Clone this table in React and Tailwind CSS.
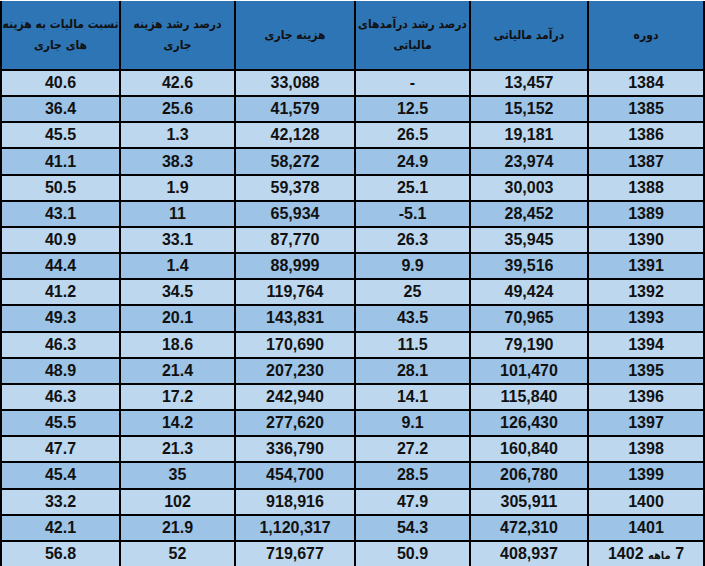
import React from 'react';

const headers = [
  ['دوره'],
  ['درآمد مالیاتی'],
  ['درصد رشد درآمدهای', 'مالیاتی'],
  ['هزینه جاری'],
  ['درصد رشد هزینه', 'جاری'],
  ['نسبت مالیات به هزینه', 'های جاری'],
];

const rows = [
  ['1384', '13,457', '-', '33,088', '42.6', '40.6'],
  ['1385', '15,152', '12.5', '41,579', '25.6', '36.4'],
  ['1386', '19,181', '26.5', '42,128', '1.3', '45.5'],
  ['1387', '23,974', '24.9', '58,272', '38.3', '41.1'],
  ['1388', '30,003', '25.1', '59,378', '1.9', '50.5'],
  ['1389', '28,452', '-5.1', '65,934', '11', '43.1'],
  ['1390', '35,945', '26.3', '87,770', '33.1', '40.9'],
  ['1391', '39,516', '9.9', '88,999', '1.4', '44.4'],
  ['1392', '49,424', '25', '119,764', '34.5', '41.2'],
  ['1393', '70,965', '43.5', '143,831', '20.1', '49.3'],
  ['1394', '79,190', '11.5', '170,690', '18.6', '46.3'],
  ['1395', '101,470', '28.1', '207,230', '21.4', '48.9'],
  ['1396', '115,840', '14.1', '242,940', '17.2', '46.3'],
  ['1397', '126,430', '9.1', '277,620', '14.2', '45.5'],
  ['1398', '160,840', '27.2', '336,790', '21.3', '47.7'],
  ['1399', '206,780', '28.5', '454,700', '35', '45.4'],
  ['1400', '305,911', '47.9', '918,916', '102', '33.2'],
  ['1401', '472,310', '54.3', '1,120,317', '21.9', '42.1'],
  ['7 ماهه 1402', '408,937', '50.9', '719,677', '52', '56.8'],
];

function Cell({ value }) {
  // the last period mixes a persian word with numbers
  if (value.includes('ماهه')) {
    const [a, word, b] = value.split(' ');
    return (
      <span dir="rtl">
        {a} <span className="font-['DejaVu_Sans_Condensed','DejaVu_Sans',sans-serif] text-[11px]">{word}</span> {b}
      </span>
    );
  }
  return <span dir="ltr">{value}</span>;
}

export default function App() {
  return (
    <div
      className="h-[566px] w-[705px] bg-white pt-px overflow-hidden"
      style={{ fontFamily: '"Liberation Sans", "DejaVu Sans", Arial, sans-serif' }}
    >
      <div
        dir="rtl"
        className="grid h-[565px] grid-cols-[114px_116px_113px_118px_113px_117px] grid-rows-[68px_repeat(19,minmax(0,1fr))] gap-[2px] bg-black px-[2px]"
      >
        {headers.map((h, i) => (
          <div
            key={i}
            className="flex flex-col items-center justify-center whitespace-nowrap bg-[#2e75b6] font-['DejaVu_Sans_Condensed','DejaVu_Sans',sans-serif] text-[12px] font-bold leading-[21px] text-[#111]"
          >
            {h.map((line, j) => (
              <span key={j}>{line}</span>
            ))}
          </div>
        ))}
        {rows.map((row, r) =>
          row.map((cell, c) => (
            <div
              key={r + '-' + c}
              className={
                'flex items-center justify-center whitespace-nowrap text-[16px] font-bold text-[#111] ' +
                (r % 2 === 0 ? 'bg-[#bdd7ee]' : 'bg-[#9dc3e6]')
              }
            >
              <Cell value={cell} />
            </div>
          ))
        )}
      </div>
    </div>
  );
}
